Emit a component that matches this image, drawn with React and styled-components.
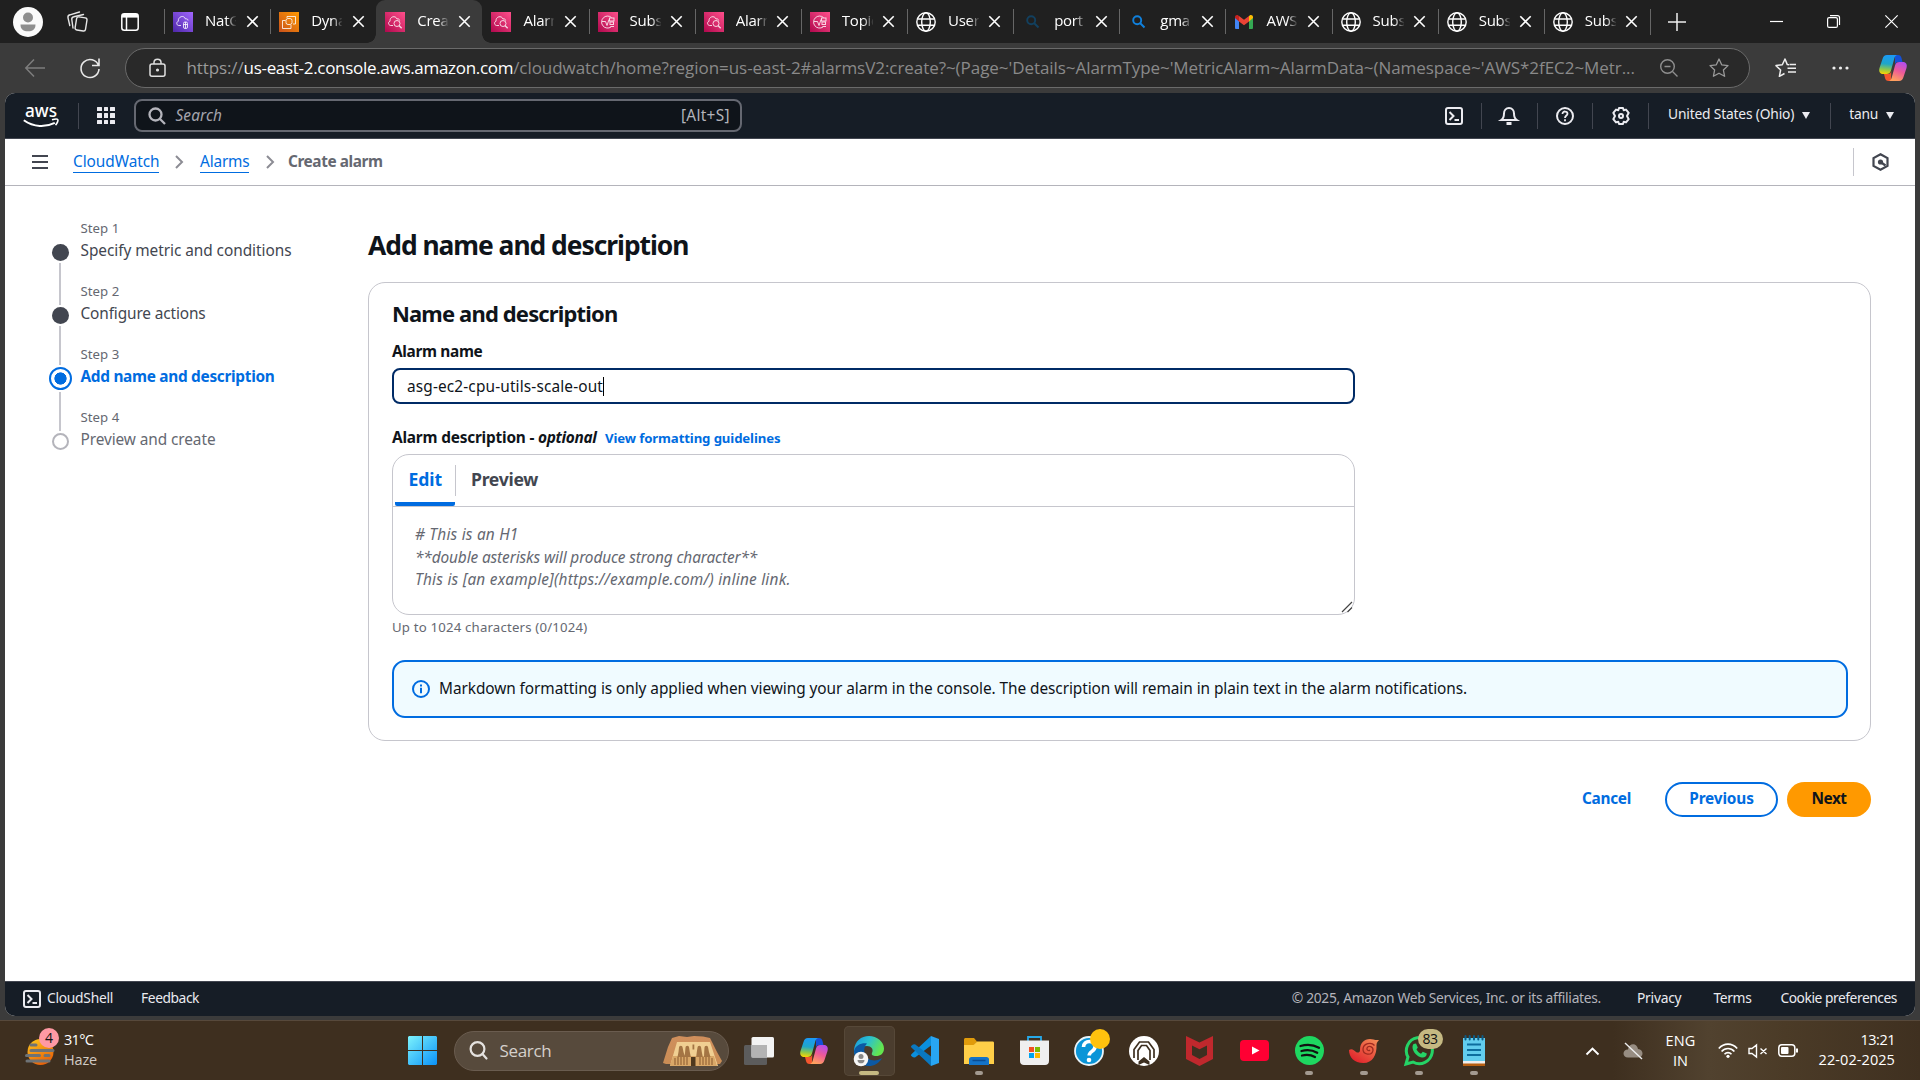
import React from "react";
import styled, { createGlobalStyle, css } from "styled-components";

const ember = `"Noto Sans", "Open Sans", sans-serif`;
const segoe = `"Open Sans", "Noto Sans", sans-serif`;

const Global = createGlobalStyle`
  * { box-sizing: border-box; }
  body { margin: 0; background: #3b3b3b; }
  svg { display: block; flex: none; overflow: visible; }
`;

const T = styled.span`
  display: inline-block;
  flex: none;
  white-space: pre;
  font-family: ${(p) => (p.$ui ? segoe : ember)};
  font-size: ${(p) => p.$s || 15.4}px;
  line-height: ${(p) => p.$lh || 22}px;
  font-weight: ${(p) => (p.$b ? 700 : 400)};
  font-style: ${(p) => (p.$i ? "italic" : "normal")};
  color: ${(p) => p.$c || "#0f141a"};
  letter-spacing: ${(p) => p.$ls || 0}px;
`;

const Screen = styled.div`
  width: 1920px;
  height: 1080px;
  overflow: hidden;
  display: flex;
  flex-direction: column;
  background: #3b3b3b;
`;

/* ---------- Browser tabs ---------- */
const Strip = styled.div`
  height: 43px;
  flex: none;
  display: flex;
  align-items: center;
  background: #202020;
`;
const StripLeft = styled.div`
  width: 164px;
  display: flex;
  align-items: center;
  padding-left: 13px;
`;
const Gap = styled.div`
  flex: none;
  width: ${(p) => p.$w || 0}px;
  height: ${(p) => p.$h || 0}px;
`;
const Grow = styled.div`
  flex: 1;
`;
const Tab = styled.div`
  width: 106.15px;
  height: 43px;
  flex: none;
  display: flex;
  align-items: center;
  padding-left: 9px;
  position: relative;
  &::before {
    content: "";
    position: absolute;
    left: 0;
    top: 9px;
    width: 1px;
    height: 25px;
    background: ${(p) => (p.$line ? "#666" : "transparent")};
  }
  ${(p) => p.$active && css`
    background: #3b3b3b;
    border-radius: 9px 9px 0 0;
    &::before, &::after {
      content: "";
      position: absolute;
      top: auto;
      bottom: 0;
      width: 9px;
      height: 9px;
      background: radial-gradient(circle at 0 0, #202020 8.5px, #3b3b3b 9px);
    }
    &::before { left: -9px; }
    &::after { left: auto; right: -9px; background: radial-gradient(circle at 100% 0, #202020 8.5px, #3b3b3b 9px); }
  `}
`;
const TabIcon = styled.div`
  width: 20px;
  height: 20px;
  display: flex;
  align-items: center;
  justify-content: center;
`;
const TabLabel = styled.div`
  width: 31px;
  margin-left: 12px;
  margin-top: -3px;
  overflow: hidden;
  mask-image: linear-gradient(90deg, #000 68%, transparent 103%);
`;

const Favicon = ({ kind }) => {
  const g = { nat: ["#4d27a8", "#a166ff"], ec2: ["#c8511b", "#ff9900"], cw: ["#b0084d", "#ff4f8b"], sns: ["#b0084d", "#ff4f8b"] }[kind];
  if (g) return (
    <svg width="20" height="20" viewBox="0 0 20 20" fill="none" stroke="#fff" strokeOpacity=".8" strokeWidth="1">
      <defs><linearGradient id={"f" + kind} x1="0" y1="1" x2="1" y2="0"><stop stopColor={g[0]} /><stop offset="1" stopColor={g[1]} /></linearGradient></defs>
      <rect width="20" height="20" fill={`url(#f${kind})`} stroke="none" />
      {kind === "nat" && <><path d="M8 13.5H5.5C3.5 13.2 3 10 5.3 9.3 4.8 4.5 11 2.5 12.500 7c2-.5 2.500.6 2.500 1.500" /><rect x="10.5" y="10" width="4" height="6.5" rx="1.5" /><path d="M12.500 10v6M10.500 12.500h4" /></>}
      {kind === "ec2" && <><path d="M8 4.500h8.500V12H14M8 4.500V6M6.500 8.500h-3V16.500H12v-3.500" /><rect x="7" y="6.5" width="6" height="6" rx="2" /></>}
      {kind === "cw" && <><path d="M8 13.500H5.500C3 13 3 9.800 5 9.300 4.500 4.500 10.500 3 12 7c1.500-.4 2.500.2 2.700 1.500" /><circle cx="12" cy="11.5" r="3" /><path d="M14.200 13.700l2.500 2.500" strokeWidth="1.4" /></>}
      {kind === "sns" && <><path d="M13.500 5.500A6 6 0 1 0 13 15M4 9.500h3.500l1.500 4 2-6" /><rect x="11.5" y="6" width="4.5" height="3" /><rect x="12" y="10" width="3.5" height="2.5" /><path d="M12.500 14.500h3.500" /></>}
    </svg>
  );
  if (kind === "globe") return (
    <svg width="20" height="20" viewBox="0 0 20 20" fill="none" stroke="#fff" strokeWidth="1.4"><circle cx="10" cy="10" r="9.2" /><ellipse cx="10" cy="10" rx="4.3" ry="9.2" /><path d="M1.500 7h17M1.500 13.200h17" /></svg>
  );
  if (kind === "gmail") return (
    <svg width="18" height="14" viewBox="0 0 18 14"><path d="M0 2.500V12.700c0 .7.5 1.300 1.200 1.300H4V5.500z" fill="#4285f4" /><path d="M14 5.500V14h2.800c.7 0 1.200-.6 1.200-1.300V2.500z" fill="#34a853" /><path d="M4 6.500V1l5 3.800L14 1v5.500l-5 3.800z" fill="#ea4335" /><path d="M0 3v-1C0 .2 2-.6 3.300.4L4 1v5.500z" fill="#c5221f" /><path d="M18 3V2c0-1.800-2-2.600-3.300-1.600L14 1v5.500z" fill="#fbbc04" /></svg>
  );
  return (
    <svg width="13" height="13" viewBox="0 0 13 13" fill="none" stroke={kind === "dim" ? "#12405f" : "#1080dc"} strokeWidth="1.9"><circle cx="5.2" cy="5.2" r="4" /><path d="M8 8l4.500 4.500" /></svg>
  );
};
const X = ({ s = 11, c = "#fff", sw = 1.6 }) => (
  <svg width={s} height={s} viewBox="0 0 11 11" stroke={c} strokeWidth={sw}><path d="M.3.3l10.400 10.400M10.700.3L.3 10.700" /></svg>
);
const TABS = [["nat", "NatG"], ["ec2", "Dyna"], ["cw", "Creat"], ["cw", "Alarm"], ["sns", "Subs"], ["cw", "Alarm"], ["sns", "Topic"], ["globe", "User"], ["dim", "port"], ["blue", "gmai"], ["gmail", "AWS"], ["globe", "Subs"], ["globe", "Subs"], ["globe", "Subs"]];

/* ---------- Address bar ---------- */
const Toolbar = styled.div`
  height: 50px;
  flex: none;
  display: flex;
  align-items: center;
  padding: 0 13px 0 25px;
`;
const Address = styled.div`
  width: 1625px;
  height: 40px;
  margin-top: -1px;
  border: 1px solid #6a6a6a;
  border-radius: 20px;
  background: #292929;
  display: flex;
  align-items: center;
  padding: 0 20px 0 23px;
`;

/* ---------- AWS frame ---------- */
const Frame = styled.div`
  width: 1910px;
  height: 923px;
  flex: none;
  margin-left: 5px;
  border-radius: 10px;
  overflow: hidden;
  background: #fff;
  display: flex;
  flex-direction: column;
`;
const Nav = styled.div`
  height: 46px;
  flex: none;
  background: #161d26;
  border-bottom: 1px solid #424650;
  display: flex;
  align-items: center;
  padding: 0 21px 0 18px;
`;
const Raised = styled.div`
  display: flex;
  align-items: center;
  padding-bottom: ${(p) => p.$by || 3}px;
`;
const Sep = styled.div`
  width: 1px;
  flex: none;
  height: ${(p) => p.$h || 26}px;
  background: ${(p) => p.$c || "#424650"};
`;
const Apps = styled.div`
  display: grid;
  grid-template-columns: repeat(3, 4.5px);
  gap: 2.2px;
`;
const Dot = styled.i`
  height: 4.5px;
  background: #ebebf0;
  border-radius: 0.5px;
`;
const SearchBox = styled.div`
  width: 608px;
  height: 33px;
  border: 2px solid #656871;
  border-radius: 8px;
  background: #0f141a;
  display: flex;
  align-items: center;
  padding: 0 10px 0 12px;
`;
const NavIcon = styled.div`
  width: 54.7px;
  height: 26px;
  display: flex;
  align-items: center;
  justify-content: center;
`;
const Caret = styled.i`
  border: 4.5px solid transparent;
  border-top: 7px solid #ebebf0;
  border-bottom: 0;
  margin: 3px 0 0 8px;
`;
const Crumbs = styled.div`
  height: 47px;
  flex: none;
  border-bottom: 1px solid #b4b4bb;
  display: flex;
  align-items: center;
  padding: 0 26px 0 27px;
`;
const Link = styled.a`
  display: flex;
  height: 21px;
  align-items: center;
  border-bottom: 1px solid #006ce0;
  margin-top: 1px;
`;
const Body = styled.div`
  flex: 1;
  display: flex;
`;
const Steps = styled.div`
  width: 363px;
  padding: 32px 0 0 43.5px;
`;
const Step = styled.div`
  display: flex;
  height: 63px;
`;
const Rail = styled.div`
  width: 23px;
  margin-right: 9px;
  display: flex;
  flex-direction: column;
  align-items: center;
  height: 63px;
`;
const RailLine = styled.div`
  width: 2px;
  background: ${(p) => (p.$on ? "#c6c6cd" : "transparent")};
  height: ${(p) => p.$h}px;
  flex: none;
`;
const Disc = styled.div`
  width: 17px;
  height: 17px;
  margin: 2px 0;
  border-radius: 50%;
  flex: none;
  background: #424650;
  ${(p) => p.$kind === "todo" && css`background: #fff; border: 2px solid #b4b4bb;`}
  ${(p) => p.$kind === "now" && css`
    width: 23px;
    height: 23px;
    border: 2px solid #006ce0;
    background: radial-gradient(circle, #006ce0 5.8px, #fff 6.4px);
  `}
`;
const StepText = styled.div`
  display: flex;
  flex-direction: column;
  gap: 1px;
  margin-top: -1px;
`;
const Main = styled.div`
  width: 1503px;
  display: flex;
  flex-direction: column;
  align-items: stretch;
  padding-top: 42px;
`;
const Card = styled.section`
  height: 459px;
  margin-top: 20px;
  border: 1px solid #c6c6cd;
  border-radius: 17px;
  padding: 16px 23px;
  display: flex;
  flex-direction: column;
  align-items: flex-start;
`;
const Field = styled.div`
  width: 963px;
  height: 36px;
  flex: none;
  margin-top: 5px;
  border: 2px solid #002b66;
  border-radius: 8px;
  display: flex;
  align-items: center;
  padding: 1px 0 0 13px;
`;
const Cursor = styled.i`
  width: 1px;
  height: 19px;
  background: #000;
`;
const LabelRow = styled.div`
  display: flex;
  align-items: center;
  height: 22px;
  margin-top: 23px;
`;
const Editor = styled.div`
  width: 963px;
  height: 161px;
  flex: none;
  margin: 5px 0 1px;
  border: 1px solid #c6c6cd;
  border-radius: 17px;
  display: flex;
  flex-direction: column;
`;
const TabsRow = styled.div`
  height: 52px;
  flex: none;
  border-bottom: 1px solid #c6c6cd;
  display: flex;
  align-items: center;
  padding-left: 2px;
`;
const EditTab = styled.div`
  width: 60px;
  height: 51px;
  border-bottom: 4px solid #006ce0;
  border-radius: 2px;
  padding: 13px 0 0 13.5px;
`;
const Area = styled.div`
  flex: 1;
  padding: 17px 2px 0 22px;
  display: flex;
  flex-direction: column;
  align-items: flex-start;
`;
const Grip = styled.div`
  align-self: flex-end;
  margin-top: 10px;
`;
const Alert = styled.div`
  width: 1456px;
  height: 58px;
  flex: none;
  margin-top: 22px;
  border: 2px solid #006ce0;
  border-radius: 13px;
  background: #f0fbff;
  display: flex;
  align-items: center;
  padding-left: 18px;
`;
const Actions = styled.div`
  display: flex;
  justify-content: flex-end;
  align-items: center;
  margin-top: 41px;
`;
const Button = styled.div`
  height: 35px;
  width: ${(p) => (p.$w ? p.$w + "px" : "auto")};
  display: flex;
  align-items: center;
  justify-content: center;
  border-radius: 18px;
  margin-left: ${(p) => p.$ml || 0}px;
  padding-bottom: 1px;
  ${(p) => p.$line && css`border: 2px solid #006ce0;`}
  ${(p) => p.$fill && css`background: #ff9900;`}
`;
const Footer = styled.div`
  height: 35px;
  flex: none;
  background: #161d26;
  border-top: 1px solid #424650;
  display: flex;
  align-items: center;
  padding: 0 18px;
`;

/* ---------- Taskbar ---------- */
const Taskbar = styled.div`
  height: 60px;
  flex: none;
  margin-top: 4px;
  border-top: 1px solid #57493b;
  background: linear-gradient(90deg, #3e2f1f 0%, #3e2f1f 84%, #51422f 89%, #4b3b27 93%, #3f3020 100%);
  display: flex;
  align-items: center;
  padding: 0 25px;
`;
const Stack = styled.div`
  display: flex;
  flex-direction: column;
  align-items: ${(p) => p.$a || "flex-start"};
  margin-top: ${(p) => p.$mt || 0}px;
`;
const Pill = styled.div`
  width: 275px;
  height: 40px;
  border-radius: 20px;
  background: #574a3c;
  border: 1px solid #6a5c4f;
  display: flex;
  align-items: center;
  padding: 0 5px 0 14px;
`;
const TaskIcon = styled.div`
  width: 51px;
  height: 50px;
  margin: 0 2px;
  flex: none;
  border-radius: 5px;
  position: relative;
  display: flex;
  align-items: center;
  justify-content: center;
  ${(p) => p.$on && css`background: #4b3d2e; box-shadow: inset 0 0 0 1px #564838;`}
  &::after {
    content: "";
    position: absolute;
    bottom: 1px;
    height: 4px;
    border-radius: 2px;
    width: ${(p) => (p.$on ? 20 : p.$run ? 8 : 0)}px;
    background: ${(p) => (p.$on ? "#c5b982" : "#a39a90")};
  }
`;
const Badge = styled.div`
  position: absolute;
  left: ${(p) => p.$x}px;
  top: ${(p) => p.$y}px;
  width: ${(p) => p.$w}px;
  height: 20px;
  border-radius: 10px;
  background: ${(p) => p.$bg};
  display: flex;
  align-items: center;
  justify-content: center;
`;
const Weather = styled.div`
  position: relative;
  width: 39px;
  height: 30px;
`;

const Shell = () => (
  <svg width="18" height="18" viewBox="0 0 18 18" fill="none" stroke="#ebebf0" strokeWidth="2"><rect x="1" y="1" width="16" height="16" rx="2" /><path d="M4.500 5l4 4-4 4M9.500 13h4.500" /></svg>
);
const Copilot = ({ s, id }) => (
  <svg width={s} height={s} viewBox="0 0 28 28">
    <defs>
      <linearGradient id={id + "a"} x1=".3" y1="0" x2=".2" y2="1"><stop stopColor="#1b9af5" /><stop offset=".45" stopColor="#1fa6c8" /><stop offset=".75" stopColor="#8fc84a" /><stop offset="1" stopColor="#ffd500" /></linearGradient>
      <linearGradient id={id + "b"} x1=".8" y1="0" x2=".4" y2="1"><stop stopColor="#b04df0" /><stop offset=".5" stopColor="#ee5a98" /><stop offset="1" stopColor="#ffa15e" /></linearGradient>
    </defs>
    <path d="M16 1h3c2 0 3 1 3.500 3l1 4h-4.500c-2 0-2.500 1-3 3z" fill="#1450d8" />
    <path d="M12 27H9.500c-2 0-3-1-3.500-3l-1-4H9c2 0 2.800-1 3.300-3z" fill="#f4562e" />
    <path d="M8 1h10c-2 .5-2.500 2.500-3 4.500l-3 11c-.8 2.500-2 3.500-4.500 3.500H4C1 20-.5 17.500.5 14L3.500 5C4.300 2.500 5.500 1 8 1z" fill={`url(#${id}a)`} />
    <path d="M20 27H10c2-.5 2.500-2.500 3-4.500l3-11c.8-2.500 2-3.500 4.500-3.500H24c3 0 4.500 2.500 3.500 6l-3 9C23.700 25.500 22.500 27 20 27z" fill={`url(#${id}b)`} />
  </svg>
);
const Mag = ({ s, c, sw }) => (
  <svg width={s} height={s} viewBox="0 0 18 18" fill="none" stroke={c} strokeWidth={sw}><circle cx="7.5" cy="7.5" r="6" /><path d="M12 12l5 5" /></svg>
);
const Chevron = () => (
  <svg width="9" height="14" viewBox="0 0 9 14" fill="none" stroke="#8c8c94" strokeWidth="2"><path d="M1 1l6 6-6 6" /></svg>
);

const STEPS = [
  ["Step 1", "Specify metric and conditions", -0.05, "done"],
  ["Step 2", "Configure actions", -0.13, "done"],
  ["Step 3", "Add name and description", -0.3, "now"],
  ["Step 4", "Preview and create", -0.09, "todo"],
];
const STEP_COLOR = { done: "#424650", now: "#006ce0", todo: "#656871" };

export default function App() {
  return (
    <Screen>
      <Global />
      <Strip>
        <StripLeft>
          <svg width="30" height="30" viewBox="0 0 30 30"><circle cx="15" cy="15" r="15" fill="#fafafa" /><circle cx="15" cy="10.5" r="5" fill="#8e8e8e" /><path d="M7.500 17.500h15c0 5-3 6.800-7.500 6.800s-7.500-1.800-7.500-6.800z" fill="#8e8e8e" /></svg>
          <Gap $w={24} />
          <svg width="21" height="21" viewBox="0 0 21 21" fill="none" stroke="#e6e6e6" strokeWidth="1.4" strokeLinejoin="round" strokeLinecap="round"><rect x="8.8" y="6.3" width="10.5" height="13.3" rx="2" transform="rotate(9 14 13)" /><path d="M6 17l-1.200-8.500c-.2-1.500.5-2.500 2-2.800L16.500 3.500M2.800 14.500L1 6.800C.7 5.300 1.500 4.200 3 3.800L12.500 1" /></svg>
          <Gap $w={33} />
          <svg width="18" height="18" viewBox="0 0 18 18" fill="none" stroke="#fff" strokeWidth="1.5"><rect x=".8" y=".8" width="16.4" height="16.4" rx="2.5" /><path d="M1 2.800h16" strokeWidth="3.6" /><path d="M5.500 4v13" /></svg>
        </StripLeft>
        {TABS.map(([k, label], i) => (
          <Tab key={i} $active={i === 2} $line={i !== 2 && i !== 3}>
            <TabIcon><Favicon kind={k} /></TabIcon>
            <TabLabel><T $ui $s={15} $ls={-0.25} $c="#fff">{label}</T></TabLabel>
            <Gap $w={10.5} />
            <X />
          </Tab>
        ))}
        <Sep $c="#666" />
        <Gap $w={17} />
        <svg width="18" height="18" viewBox="0 0 18 18" stroke="#eee" strokeWidth="1.5"><path d="M9 0v18M0 9h18" /></svg>
        <Gap $w={84} />
        <svg width="13" height="13" viewBox="0 0 13 13" stroke="#fff" strokeWidth="1.2"><path d="M0 6.500h13" /></svg>
        <Gap $w={44} />
        <svg width="13" height="13" viewBox="0 0 13 13" stroke="#fff" strokeWidth="1.2" fill="none"><rect x=".6" y="2.6" width="9.8" height="9.8" rx="1.5" /><path d="M3 .6h7.500c1.200 0 2 .8 2 2V10" /></svg>
        <Gap $w={45} />
        <X s={13} sw={1} />
      </Strip>
      <Toolbar>
        <svg width="20" height="18" viewBox="0 0 20 18" fill="none" stroke="#7d7d7d" strokeWidth="1.5"><path d="M9 .5L.8 9l8.200 8.500M.8 9H20" /></svg>
        <Gap $w={35} />
        <svg width="20" height="20" viewBox="0 0 20 20" fill="none" stroke="#e8e8e8" strokeWidth="1.6"><path d="M18.500 7.500A9 9 0 1 0 19 11M19 .5v7h-7" /></svg>
        <Gap $w={25} />
        <Address>
          <svg width="17" height="19" viewBox="0 0 17 19" fill="none" stroke="#e0e0e0" strokeWidth="1.5"><rect x="1" y="6" width="15" height="12.2" rx="2" /><path d="M5 6V4.500C5 0 12 0 12 4.500V6" /><circle cx="8.5" cy="12" r=".8" fill="#e0e0e0" /></svg>
          <Gap $w={20.5} />
          <T $ui $s={17} $c="#9a9a9a" $ls={-0.12}>https://</T>
          <T $ui $s={17} $c="#fff" $ls={-0.3}>us-east-2.console.aws.amazon.com</T>
          <T $ui $s={17} $c="#8a8a8a" $ls={-0.055}>/cloudwatch/home?region=us-east-2#alarmsV2:create?~(Page~'Details~AlarmType~'MetricAlarm~AlarmData~(Namespace~'AWS*2fEC2~Metr...</T>
          <Grow />
          <svg width="18" height="18" viewBox="0 0 18 18" fill="none" stroke="#8f8f8f" strokeWidth="1.4"><circle cx="7.5" cy="7.5" r="6.8" /><path d="M12.500 12.500l5 5M4.500 7.500h6" /></svg>
          <Gap $w={31} />
          <svg width="20" height="20" viewBox="0 0 20 20" fill="none" stroke="#9a9a9a" strokeWidth="1.3" strokeLinejoin="round"><path d="M10 1l2.700 5.800 6.300.8-4.600 4.400 1.200 6.300L10 15.200l-5.600 3.100L5.600 12 1 7.600l6.300-.8z" /></svg>
        </Address>
        <Gap $w={25} />
        <svg width="21" height="20" viewBox="0 0 21 20" fill="none" stroke="#eee" strokeWidth="1.5" strokeLinejoin="round"><path d="M14 6.800L12.300 6.600 10 1 7.300 6.800 1 7.600l4.600 4.400-1.200 6.300L9.500 15.500M12.500 10.200H21M14.500 6.500H21M13 14H21" /></svg>
        <Gap $w={36} />
        <svg width="17" height="4" viewBox="0 0 17 4" fill="#eee"><circle cx="2" cy="2" r="1.6" /><circle cx="8.5" cy="2" r="1.6" /><circle cx="15" cy="2" r="1.6" /></svg>
        <Grow />
        <Copilot s={28} id="ca" />
      </Toolbar>
      <Frame>
        <Nav>
          <svg width="37" height="24" viewBox="0 0 37 24" fill="none"><text x="2" y="13" fontFamily="Noto Sans" fontWeight="500" fontSize="18" textLength="32" lengthAdjust="spacingAndGlyphs" fill="#fff">aws</text><path d="M.8 16.300c10 7.200 22 7 31 2.500" stroke="#fff" strokeWidth="2" /><path d="M29 15.800c3-1 5.300-1 5.800-.2s-.3 3.500-2.300 5.500" stroke="#fff" strokeWidth="1.6" /></svg>
          <Gap $w={18} /><Sep /><Gap $w={18} />
          <Apps>{Array.from({ length: 9 }, (_, i) => <Dot key={i} />)}</Apps>
          <Gap $w={19} />
          <SearchBox>
            <Mag s={18} c="#b4b4bb" sw={2.3} />
            <Gap $w={9.5} />
            <T $i $c="#a4a4ad" $ls={0.15}>Search</T>
            <Grow />
            <T $c="#b4b4bb" $ls={0.32}>[Alt+S]</T>
          </SearchBox>
          <Grow />
          <NavIcon><Shell /></NavIcon><Sep />
          <NavIcon><svg width="18" height="18" viewBox="0 0 18 18" fill="none" stroke="#ebebf0" strokeWidth="2"><path d="M1.200 13c2.300-1.500 2.800-3.500 2.800-6.500C4 3.500 6 1 9 1s5 2.500 5 5.500c0 3 .5 5 2.800 6.500z" /><path d="M7.500 16h3v1h-3z" strokeWidth="2" /></svg></NavIcon><Sep />
          <NavIcon><svg width="18" height="18" viewBox="0 0 18 18" fill="none" stroke="#ebebf0" strokeWidth="2"><circle cx="9" cy="9" r="8" /><path d="M6.500 7c0-3.500 5-3 5-.3C11.500 8.500 9 8.500 9 11M9 12.200v2" strokeWidth="1.8" /></svg></NavIcon><Sep />
          <NavIcon><svg width="18" height="18" viewBox="0 0 18 18" fill="none" stroke="#ebebf0" strokeWidth="2" strokeLinejoin="round"><path d="M7 1h4l.7 2.300 2.300-.7 2.700 3.200L15 9l1.700 3.200L14 15.400l-2.300-.7L11 17H7l-.7-2.300-2.300.7-2.700-3.200L3 9 1.300 5.800 4 2.600l2.300.7z" /><circle cx="9" cy="9" r="2" /></svg></NavIcon><Sep />
          <Gap $w={19} />
          <Raised><T $s={13.8} $lh={18} $c="#ebebf0" $ls={-0.18}>United States (Ohio)</T><Caret /></Raised>
          <Gap $w={20} /><Sep /><Gap $w={18} />
          <Raised><T $s={13.8} $lh={18} $c="#ebebf0" $ls={-0.25}>tanu</T><Caret /></Raised>
        </Nav>
        <Crumbs>
          <svg width="16" height="14" viewBox="0 0 16 14" stroke="#424650" strokeWidth="2"><path d="M0 1h16M0 7h16M0 13h16" /></svg>
          <Gap $w={25} />
          <Link><T $c="#006ce0" $ls={-0.06}>CloudWatch</T></Link>
          <Gap $w={16} />
          <Chevron />
          <Gap $w={15.5} />
          <Link><T $c="#006ce0" $ls={-0.18}>Alarms</T></Link>
          <Gap $w={16.5} />
          <Chevron />
          <Gap $w={13} />
          <T $b $c="#656871" $ls={-0.42}>Create alarm</T>
          <Grow />
          <Sep $c="#c6c6cd" $h={28} />
          <Gap $w={18} />
          <svg width="17" height="18" viewBox="0 0 17 18" fill="none" stroke="#424650" strokeWidth="2.2"><path d="M8.500 1.200l7 3.900v7.800l-7 3.900-7-3.900V5.100z" /><circle cx="8.5" cy="9" r="2.6" fill="#424650" stroke="none" /><path d="M8.500 9l5 3.500" /></svg>
        </Crumbs>
        <Body>
          <Steps>
            {STEPS.map(([label, title, ls, kind], i) => (
              <Step key={label}>
                <Rail>
                  <RailLine $on={i > 0} $h={kind === "now" ? 21 : 24} />
                  <Disc $kind={kind} />
                  <RailLine $on={i < 3} $h={kind === "now" ? 15 : 18} />
                </Rail>
                <StepText>
                  <T $s={13.2} $c="#656871" $ls={0.05}>{label}</T>
                  <T $b={kind === "now"} $c={STEP_COLOR[kind]} $ls={ls}>{title}</T>
                </StepText>
              </Step>
            ))}
          </Steps>
          <Main>
            <T $b $s={26.4} $lh={34} $ls={-1.02}>Add name and description</T>
            <Card>
              <T $b $s={22} $lh={28} $ls={-0.85}>Name and description</T>
              <Gap $h={14} />
              <T $b $lh={22} $ls={-0.33}>Alarm name</T>
              <Field><T $ls={0.14}>asg-ec2-cpu-utils-scale-out</T><Cursor /></Field>
              <LabelRow>
                <T $b $ls={-0.2}>{"Alarm description - "}</T><T $b $i $ls={-0.32}>optional</T>
                <Gap $w={8.5} />
                <T $b $s={13.2} $c="#006ce0" $ls={-0.12}>View formatting guidelines</T>
              </LabelRow>
              <Editor>
                <TabsRow>
                  <EditTab><T $b $s={17.6} $c="#006ce0" $ls={-0.09}>Edit</T></EditTab>
                  <Sep $c="#c6c6cd" $h={31} />
                  <Gap $w={15} />
                  <Raised $by={3}><T $b $s={17.6} $c="#424650" $ls={-0.3}>Preview</T></Raised>
                </TabsRow>
                <Area>
                  <T $i $c="#656871" $lh={22.6} $ls={0.21}># This is an H1</T>
                  <T $i $c="#656871" $lh={22.6} $ls={-0.12}>**double asterisks will produce strong character**</T>
                  <T $i $c="#656871" $lh={22.6} $ls={0.23}>This is [an example](https://example.com/) inline link.</T>
                  <Grip><svg width="10" height="10" viewBox="0 0 10 10" stroke="#444" strokeWidth="1.2"><path d="M0 10L10 0M5.500 10L10 5.500" /></svg></Grip>
                </Area>
              </Editor>
              <T $s={13.2} $c="#656871" $ls={0.19}>Up to 1024 characters (0/1024)</T>
              <Alert>
                <svg width="18" height="18" viewBox="0 0 18 18" fill="none" stroke="#006ce0" strokeWidth="2"><circle cx="9" cy="9" r="8" /><path d="M9 7.800v5.500M9 4.500v2" /></svg>
                <Gap $w={9} />
                <T $ls={-0.07}>Markdown formatting is only applied when viewing your alarm in the console. The description will remain in plain text in the alarm notifications.</T>
              </Alert>
            </Card>
            <Actions>
              <Button><T $b $c="#006ce0" $ls={-0.3}>Cancel</T></Button>
              <Button $line $w={113} $ml={34}><T $b $c="#006ce0" $ls={-0.16}>Previous</T></Button>
              <Button $fill $w={84} $ml={9}><T $b $ls={-0.45}>Next</T></Button>
            </Actions>
          </Main>
        </Body>
        <Footer>
          <Shell /><Gap $w={6} />
          <Raised $by={2}><T $s={13.8} $c="#ebebf0" $ls={-0.26}>CloudShell</T></Raised>
          <Gap $w={28} />
          <Raised $by={2}><T $s={13.8} $c="#ebebf0" $ls={-0.43}>Feedback</T></Raised>
          <Grow />
          <Raised $by={2}>
            <T $s={13.8} $c="#b4b4bb" $ls={-0.3}>© 2025, Amazon Web Services, Inc. or its affiliates.</T>
            <Gap $w={36} />
            <T $s={13.8} $c="#ebebf0" $ls={-0.22}>Privacy</T>
            <Gap $w={32} />
            <T $s={13.8} $c="#ebebf0" $ls={-0.34}>Terms</T>
            <Gap $w={29} />
            <T $s={13.8} $c="#ebebf0" $ls={-0.45}>Cookie preferences</T>
          </Raised>
        </Footer>
      </Frame>
      <Taskbar>
        <Weather>
          <svg width="30" height="30" viewBox="0 0 30 30"><defs><linearGradient id="sun" x2=".5" y2="1"><stop stopColor="#ffcb1c" /><stop offset="1" stopColor="#e8630a" /></linearGradient></defs><circle cx="15.5" cy="16" r="13" fill="url(#sun)" /><path d="M6 9h5M6 14.500h22M1.500 19.500h13M20 19.500h4M2 25h22" stroke="#6e7376" strokeWidth="3" strokeLinecap="round" /></svg>
          <Badge $x={14} $y={-8} $w={20} $bg="#ff99a4"><T $ui $s={14} $c="#111">4</T></Badge>
        </Weather>
        <Stack $mt={-1}>
          <T $ui $s={14.5} $lh={20.5} $c="#fff" $ls={-0.7}>31°C</T>
          <T $ui $s={14.5} $lh={20} $c="#d0cbc5" $ls={-0.17}>Haze</T>
        </Stack>
        <Grow />
        <svg width="29" height="29" viewBox="0 0 29 29"><defs><linearGradient id="win" x2="1" y2="1"><stop stopColor="#7df3fc" /><stop offset="1" stopColor="#0a91f7" /></linearGradient></defs><path d="M1 0h13v14H0V1zM15 0h13l1 1v13H15zM0 15h14v14H1l-1-1zM15 15h14v13l-1 1H15z" fill="url(#win)" /></svg>
        <Gap $w={17} />
        <Pill>
          <svg width="19" height="19" viewBox="0 0 19 19" fill="none" stroke="#e5e2df" strokeWidth="2.2" strokeLinecap="round"><circle cx="8.5" cy="8" r="6.9" /><path d="M13.500 13l4 4.500" /></svg>
          <Gap $w={12} />
          <T $ui $s={17} $c="#d5d0cb" $ls={-0.35}>Search</T>
          <Grow />
          <svg width="60" height="31" viewBox="0 0 60 31">
            <defs><linearGradient id="rock" x2="0" y2="1"><stop stopColor="#d08f5c" /><stop offset="1" stopColor="#c98d55" /></linearGradient></defs>
            <path d="M0 28L5 12 9 3l7-2 8 1 7-1 9 .5 7 1.500 4 8 3 6 5 9-2 3H3z" fill="url(#rock)" />
            <path d="M7 31L14 7h33l8 24z" fill="#f0cf92" />
            <path d="M10 21h41l3 10H7z" fill="#d9a868" />
            <path d="M16 12.500a1.800 1.800 0 0 1 3.600 0l.9 4.500 1.500 5h-7.500l1-5zM22.500 12.500a1.800 1.800 0 0 1 3.600 0l.7 4.500 1 5h-6.300l.6-5zM34.500 12.500a1.800 1.800 0 0 1 3.600 0l.7 4.500 1 5h-6.600l.6-5zM41.500 12.500a1.800 1.800 0 0 1 3.600 0l.9 4.500 1.500 5H41l.2-5z" fill="#a47544" />
            <path d="M12 23v7M15 22v8M18 22v8M21 22v8M24 22v8M37 22v8M40 22v8M43 22v8M46 22v8M49 23v7" stroke="#9a6a3b" strokeWidth="1.3" />
            <path d="M28 22h4.500v9H28z" fill="#4e381d" /><path d="M29.500 9.500h1.800v5h-1.800z" fill="#a47544" />
          </svg>
        </Pill>
        <Gap $w={3} />
        <TaskIcon><svg width="30" height="28" viewBox="0 0 30 28"><rect y="8" width="23" height="20" rx="1.5" fill="#5c5c5c" /><rect x="7.5" width="22.5" height="20.5" rx="1.5" fill="#f3f3f3" /><path d="M7.500 8H23v12.500H7.500z" fill="#b3b3b3" /></svg></TaskIcon>
        <TaskIcon><Copilot s={28} id="cb" /></TaskIcon>
        <TaskIcon $on><svg width="30" height="30" viewBox="0 0 30 30"><defs><linearGradient id="eg" x2="1" y2=".4"><stop stopColor="#1794de" /><stop offset=".5" stopColor="#2bc1d0" /><stop offset="1" stopColor="#63e64f" /></linearGradient></defs><path d="M0 14C1 5 7 0 15 0s15 6 15 12.500c0 5-3.500 7.500-8 7.500-3 0-5-1-4-3 2-4-1-7-5-7-7 0-12 5-13 9z" fill="url(#eg)" /><path d="M0 15c1.500-6 8-8.500 13-7.500C8 12 10 22 17 24c4 1.200 8 0 11-2-3 5.500-8 8-13 8C6.500 30 0 23 0 15z" fill="#0c59a4" /><circle cx="7" cy="23" r="7.3" fill="#f7f7f7" /><circle cx="7" cy="20.5" r="2.5" fill="#888" /><path d="M3.500 24h7c0 2.500-1.500 3.300-3.500 3.300S3.500 26.500 3.500 24z" fill="#888" /></svg></TaskIcon>
        <TaskIcon><svg width="30" height="30" viewBox="0 0 30 30"><path d="M22 0v9.500L6 21.500 4 21.300l-1.600-1.200a1.200 1.200 0 0 1 0-1.800z" fill="#0b8fdd" /><path d="M22 30v-9.500L6 8.300 4 8.500 2.400 9.700a1.200 1.200 0 0 0 0 1.800z" fill="#0a78c0" /><path d="M22 0l8 3v24l-8 3z" fill="#28a5f2" /></svg></TaskIcon>
        <TaskIcon $run><svg width="30" height="28" viewBox="0 0 30 28"><path d="M0 2.500C0 1.500.8 1 1.500 1H10l3 3.500L10 8H0z" fill="#e09b0b" /><path d="M0 8h9.500L13 4.500h15.500c1 0 1.500.5 1.500 1.500v21H0z" fill="#ffcf48" /><path d="M5 28v-5.500c0-1.500 1-2.500 2.500-2.500h15c1.500 0 2.500 1 2.500 2.500V28z" fill="#1473c8" /><path d="M8.500 23.500h13" stroke="#0a4c93" strokeWidth="1.5" /></svg></TaskIcon>
        <TaskIcon><svg width="29" height="29" viewBox="0 0 29 29"><path d="M8 6V1h13v5" fill="none" stroke="#27a9e8" strokeWidth="1.8" /><path d="M0 4.500h29V25c0 2.500-1.500 4-4 4H4c-2.500 0-4-1.500-4-4z" fill="#efefef" /><path d="M9 11h5v5H9z" fill="#f25022" /><path d="M15 11h5v5h-5z" fill="#7fba00" /><path d="M9 17h5v5H9z" fill="#00a4ef" /><path d="M15 17h5v5h-5z" fill="#ffb900" /></svg></TaskIcon>
        <TaskIcon><svg width="30" height="30" viewBox="0 0 30 30"><circle cx="15" cy="15" r="14" fill="#0a95d8" stroke="#e9f4fa" strokeWidth="1.8" /><path d="M9.500 11c0-7.500 11.500-7 11.500-.3 0 5-5.800 4.300-5.800 8.800" fill="none" stroke="#fff" strokeWidth="3.6" /><circle cx="15" cy="24" r="2.3" fill="#fff" /></svg><Badge $x={26} $y={3} $w={20} $bg="#ffc20e" /></TaskIcon>
        <TaskIcon><svg width="30" height="30" viewBox="0 0 30 30"><circle cx="15" cy="15" r="15" fill="#fff" /><path d="M5 22V13.500L10.500 6h9L25 13.500V22M9 24V14.500l3.500-5h5l3.500 5V24" fill="none" stroke="#3d2f20" strokeWidth="1.7" /><path d="M9.500 29v-3.500L15 21l5.500 4.500V29L15 26.500z" fill="#3d2f20" /></svg></TaskIcon>
        <TaskIcon><svg width="27" height="30" viewBox="0 0 27 30"><path d="M0 0l13.500 6.500L27 0v23l-13.500 7L0 23z" fill="#c0282d" /><path d="M6 9.500l7.500 3.700L21 9.500V19l-7.500 4L6 19z" fill="#3d2f20" /></svg></TaskIcon>
        <TaskIcon><svg width="29" height="21" viewBox="0 0 29 21"><rect width="29" height="21" rx="4" fill="#ff0033" /><path d="M12 6.500l7.500 4-7.500 4z" fill="#fff" /></svg></TaskIcon>
        <TaskIcon $run><svg width="29" height="29" viewBox="0 0 29 29"><circle cx="14.5" cy="14.5" r="14.5" fill="#1ed760" /><path d="M5.500 10c6-1.800 13-1.300 18.500 1.700M6.500 15c5-1.500 11-1 15.700 1.700M7 19.500c4.500-1.200 9-.8 13 1.500" fill="none" stroke="#111" strokeWidth="2.3" strokeLinecap="round" /></svg></TaskIcon>
        <TaskIcon $run><svg width="30" height="24" viewBox="0 0 30 24"><defs><linearGradient id="sh" x1="1" y1="0" x2=".2" y2="1"><stop stopColor="#f58f58" /><stop offset="1" stopColor="#e0202a" /></linearGradient></defs><path d="M0 11c3-2 5 .5 7 2 2 1.300 4 .5 4-2C11 4 15 0 21 0c3 0 5 1.500 9 1-1 1.500-2.500 2-2.500 5 .5 10-4 18-13 18C5 24 0 18 0 11z" fill="url(#sh)" /><path d="M25.500 6.500c-3-3.500-11-2.500-11.500 3.500-.3 6 9 7 10 1.500.5-4-4.500-5.500-6-2.500-.6 2 1.500 3.500 3 2" fill="none" stroke="#a02a20" strokeWidth="1.3" /></svg></TaskIcon>
        <TaskIcon $run><svg width="30" height="30" viewBox="0 0 30 30"><path d="M2 28l2-7A13 13 0 1 1 9 26z" fill="none" stroke="#25d366" strokeWidth="3" /><path d="M9.500 8l2.500-.5 1.800 4-1.300 2c1 2 2.500 3.300 4.500 4.200l1.800-2 4 1.800c0 3-2.500 4.500-5 4C13 20.500 8.500 16 8.500 11c0-1 .3-2.200 1-3z" fill="#25d366" /></svg><Badge $x={24} $y={3} $w={25} $bg="#c5b982"><T $ui $s={14} $c="#111" $ls={-0.5}>83</T></Badge></TaskIcon>
        <TaskIcon $run><svg width="22" height="30" viewBox="0 0 22 30"><path d="M0 2h22v25H0z" fill="#62cdee" /><path d="M0 25h22v3H0z" fill="#eee" /><path d="M0 27.500h22V30H0z" fill="#b65f12" /><path d="M4 8.500h14M4 14h14M4 19h14" stroke="#0d6d9e" strokeWidth="2" /><path d="M2.500 0v3.500M6.700 0v3.500M11 0v3.500M15.300 0v3.500M19.500 0v3.500" stroke="#0d5c85" strokeWidth="2" strokeLinecap="round" /></svg></TaskIcon>
        <Gap $w={84} />
        <svg width="13" height="8" viewBox="0 0 13 8" fill="none" stroke="#fff" strokeWidth="1.9"><path d="M.5 7.500l6-6 6 6" /></svg>
        <Gap $w={24} />
        <svg width="20" height="16" viewBox="0 0 20 16"><path d="M5 14.500C-1 14.500-1 6.500 5 6.500 6-.5 14-.5 15 6c6 .5 6 8.500 0 8.500z" fill="#978d82" /><path d="M2 0l17 16" stroke="#eee" strokeWidth="1.4" /></svg>
        <Gap $w={23} />
        <Stack $a="center">
          <T $ui $s={14.5} $lh={20} $c="#fff" $ls={0.16}>ENG</T>
          <T $ui $s={14.5} $lh={20} $c="#fff">IN</T>
        </Stack>
        <Gap $w={22} />
        <svg width="20" height="15" viewBox="0 0 20 15" fill="none" stroke="#fff" strokeWidth="1.6"><path d="M.8 5.500C6-.3 14-.3 19.200 5.500M3.600 8.500c3.500-4 9.300-4 12.800 0M6.500 11.300c2-2.200 5-2.200 7 0" /><circle cx="10" cy="13.3" r="1.6" fill="#fff" stroke="none" /></svg>
        <Gap $w={10} />
        <svg width="20" height="14" viewBox="0 0 20 14" fill="none" stroke="#fff" strokeWidth="1.4"><path d="M1 4.500h3L8.500 1v12L4 9.500H1zM12.500 4.500l6 5.500M18.500 4.500l-6 5.500" /></svg>
        <Gap $w={10} />
        <svg width="20" height="13" viewBox="0 0 20 13" fill="none" stroke="#fff" strokeWidth="1.5"><rect x=".8" y=".8" width="16" height="11.4" rx="3" /><path d="M19 4.500v4" strokeWidth="2" /><rect x="3" y="3" width="7.5" height="7" rx="1" fill="#fff" stroke="none" /></svg>
        <Gap $w={21} />
        <Stack $a="flex-end" $mt={-2}>
          <T $ui $s={14.5} $lh={20} $c="#fff" $ls={-0.5}>13:21</T>
          <T $ui $s={14.5} $lh={20} $c="#fff" $ls={0.08}>22-02-2025</T>
        </Stack>
      </Taskbar>
    </Screen>
  );
}
